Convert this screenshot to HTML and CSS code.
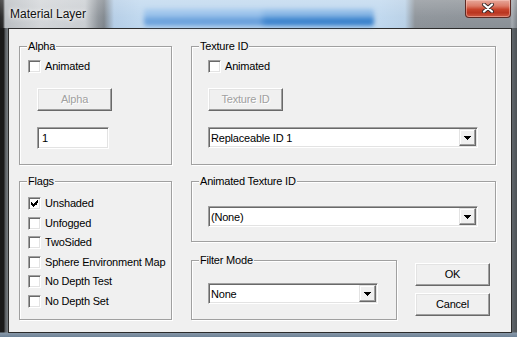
FILE: index.html
```html
<!DOCTYPE html>
<html>
<head>
<meta charset="utf-8">
<link rel="stylesheet" href="styles.css">
</head>
<body>
<div class="window">
  <div class="titlebar">
    <span class="title">Material Layer</span>
    <div class="glass-blur"></div>
    <div class="close">
      <svg width="14" height="10" viewBox="0 0 14 10">
        <path d="M3 1.5 L11 8.5 M11 1.5 L3 8.5" stroke="#3a2a2a" stroke-width="4" stroke-linecap="round"/>
        <path d="M3 1.5 L11 8.5 M11 1.5 L3 8.5" stroke="#ffffff" stroke-width="2.2" stroke-linecap="round"/>
      </svg>
    </div>
  </div>
  <div class="client">
    <div class="col col-left">
      <fieldset class="group g-alpha">
        <legend>Alpha</legend>
        <div class="gbody alpha-body">
          <div class="check"><span class="box"></span><span>Animated</span></div>
          <div class="btn disabled">Alpha</div>
          <div class="edit">1</div>
        </div>
      </fieldset>
      <fieldset class="group g-flags">
        <legend>Flags</legend>
        <div class="gbody flags-body">
          <div class="check"><span class="box checked"><svg width="7" height="7" viewBox="0 0 7 7" shape-rendering="crispEdges"><path d="M6 0h1v3H6z M5 1h1v4H5z M4 2h1v3H4z M0 2h1v3H0z M1 3h1v3H1z M2 4h1v3H2z M3 3h1v3H3z" fill="#000"/></svg></span><span>Unshaded</span></div>
          <div class="check"><span class="box"></span><span>Unfogged</span></div>
          <div class="check"><span class="box"></span><span>TwoSided</span></div>
          <div class="check"><span class="box"></span><span>Sphere Environment Map</span></div>
          <div class="check"><span class="box"></span><span>No Depth Test</span></div>
          <div class="check"><span class="box"></span><span>No Depth Set</span></div>
        </div>
      </fieldset>
    </div>
    <div class="col col-right">
      <fieldset class="group g-texture">
        <legend>Texture ID</legend>
        <div class="gbody tex-body">
          <div class="check"><span class="box"></span><span>Animated</span></div>
          <div class="btn disabled">Texture ID</div>
          <div class="combo wide">
            <span class="combo-text">Replaceable ID 1</span>
            <span class="combo-btn"><svg width="7" height="4" viewBox="0 0 7 4" shape-rendering="crispEdges"><path d="M0 0h7v1H0z M1 1h5v1H1z M2 2h3v1H2z M3 3h1v1H3z" fill="#000"/></svg></span>
          </div>
        </div>
      </fieldset>
      <fieldset class="group g-animtex">
        <legend>Animated Texture ID</legend>
        <div class="gbody animtex-body">
          <div class="combo wide">
            <span class="combo-text">(None)</span>
            <span class="combo-btn"><svg width="7" height="4" viewBox="0 0 7 4" shape-rendering="crispEdges"><path d="M0 0h7v1H0z M1 1h5v1H1z M2 2h3v1H2z M3 3h1v1H3z" fill="#000"/></svg></span>
          </div>
        </div>
      </fieldset>
      <div class="bottom-row">
        <fieldset class="group g-filter">
          <legend>Filter Mode</legend>
          <div class="gbody filter-body">
            <div class="combo narrow">
              <span class="combo-text">None</span>
              <span class="combo-btn"><svg width="7" height="4" viewBox="0 0 7 4" shape-rendering="crispEdges"><path d="M0 0h7v1H0z M1 1h5v1H1z M2 2h3v1H2z M3 3h1v1H3z" fill="#000"/></svg></span>
            </div>
          </div>
        </fieldset>
        <div class="actions">
          <div class="btn">OK</div>
          <div class="btn">Cancel</div>
        </div>
      </div>
    </div>
  </div>
</div>
</body>
</html>
```

FILE: styles.css
```css
* { box-sizing: border-box; }
html, body { margin: 0; padding: 0; }
body {
  width: 517px;
  height: 337px;
  overflow: hidden;
  background: #1b1b1b;
  font-family: "Liberation Sans", Arial, sans-serif;
  font-size: 11px;
  letter-spacing: -0.2px;
  color: #000;
}
.window {
  width: 517px;
  height: 337px;
  display: flex;
  flex-direction: column;
  background:
    linear-gradient(to bottom, rgba(0,0,0,0) 0, rgba(0,0,0,0) 332px, #8798a8 333px, #6d8296 337px),
    linear-gradient(to right, #1a1a1a 0, #1a1a1a 4px, #55595d 5px, #7c8287 8px, #7c8287 510px, #60666b 512px, #4d5256 517px);
}
.titlebar {
  height: 28px;
  flex: none;
  display: flex;
  align-items: flex-start;
  background:
    linear-gradient(to bottom, rgba(255,255,255,0.22) 0, rgba(255,255,255,0.05) 60%, rgba(255,255,255,0) 100%),
    linear-gradient(to right, #1e1e1e 0, #2a2a2a 3px, #b9bdc1 5px, #d2d5d8 40px, #c9cdd1 85px, #8d9399 98px, #7e858c 104px, #b4cde6 114px, #bed7ee 140px, #bed7ee 380px, #b8d0e6 405px, #8c9298 415px, #8a9096 465px, #8a9096 510px, #a4aab0 512px, #7a8086 517px);
}
.title {
  margin: 7px 0 0 10px;
  font-size: 12px;
  line-height: 14px;
  letter-spacing: 0;
  color: #111;
  text-shadow: 0 0 6px rgba(255,255,255,0.95), 0 0 3px rgba(255,255,255,0.9);
  white-space: nowrap;
}
.glass-blur {
  margin: 9px 0 0 58px;
  width: 230px;
  height: 17px;
  background:
    linear-gradient(to bottom, rgba(190,218,245,0.75) 0, rgba(190,218,245,0.55) 40%, rgba(190,218,245,0) 60%),
    linear-gradient(to right, #6ea4dd 0, #6aa1dc 50%, #3f86cf 53%, #3a82cc 100%);
  filter: blur(2px);
  border-radius: 3px;
}
.close {
  margin-left: auto;
  margin-right: 6px;
  width: 46px;
  height: 18px;
  border: 1px solid #5b2a24;
  border-top: none;
  border-radius: 0 0 4px 4px;
  background: linear-gradient(to bottom, #e7a89b 0, #dc7c68 35%, #c8442c 55%, #b93520 75%, #cf5a44 100%);
  box-shadow: inset 0 0 0 1px rgba(255,210,200,0.45);
  display: flex;
  align-items: center;
  justify-content: center;
}
.close svg { display: block; margin-top: -1px; }
.client {
  flex: 1;
  margin: 0 5px 4px 8px;
  border: 1px solid #2c2c2c;
  background: #f0f0f0;
  display: flex;
  align-items: flex-start;
  gap: 19px;
  padding: 11px 0 0 10px;
}
.col { display: flex; flex-direction: column; }
.col-left { width: 153px; }
.col-right { width: 305px; }
.group {
  margin: 0;
  padding: 0;
  min-width: 0;
  border: 1px solid #a0a0a0;
  box-shadow: inset 1px 1px 0 #fff, 1px 1px 0 #fff;
}
.group legend {
  margin-left: 7px;
  padding: 0 1px;
  line-height: 13px;
  height: 13px;
  background: #f0f0f0;
  white-space: nowrap;
}
.gbody { display: flex; flex-direction: column; align-items: flex-start; }
.g-alpha, .g-texture { height: 125px; }
.g-flags { height: 145px; margin-top: 10px; }
.g-animtex { height: 67px; margin-top: 10px; }
.bottom-row { display: flex; align-items: flex-start; margin-top: 12px; }
.g-filter { width: 206px; height: 66px; }
.alpha-body { padding: 7px 0 0 8px; }
.alpha-body .btn { margin: 15px 0 0 9px; }
.alpha-body .edit { margin: 16px 0 0 9px; }
.tex-body { padding: 7px 0 0 16px; }
.tex-body .btn { margin-top: 15px; }
.tex-body .combo { margin-top: 16px; }
.flags-body { padding: 9px 0 0 8px; gap: 6.5px; }
.animtex-body { padding: 18px 0 0 16px; }
.filter-body { padding: 16px 0 0 16px; }
.check {
  display: flex;
  align-items: center;
  height: 13px;
  line-height: 13px;
  white-space: nowrap;
}
.box {
  width: 13px;
  height: 13px;
  flex: none;
  margin-right: 4px;
  background: #fff;
  border: 1px solid;
  border-color: #a0a0a0 #fff #fff #a0a0a0;
  box-shadow: inset 1px 1px 0 #696969, inset -1px -1px 0 #e3e3e3;
  display: flex;
  align-items: center;
  justify-content: center;
}
.box svg { display: block; }
.btn {
  width: 75px;
  height: 23px;
  line-height: 21px;
  text-align: center;
  background: #f0f0f0;
  border: 1px solid;
  border-color: #fff #696969 #696969 #fff;
  box-shadow: inset -1px -1px 0 #a0a0a0, inset 1px 1px 0 #e3e3e3;
  white-space: nowrap;
}
.btn.disabled {
  color: #a0a0a0;
  text-shadow: 1px 1px 0 #fff;
}
.edit {
  width: 72px;
  height: 22px;
  line-height: 18px;
  padding-left: 4px;
  background: #fff;
  border: 1px solid;
  border-color: #a0a0a0 #fff #fff #a0a0a0;
  box-shadow: inset 1px 1px 0 #696969, inset -1px -1px 0 #e3e3e3;
  padding-top: 1px;
}
.combo {
  height: 21px;
  display: flex;
  align-items: stretch;
  background: #fff;
  border: 1px solid;
  border-color: #a0a0a0 #fff #fff #a0a0a0;
  box-shadow: inset 1px 1px 0 #696969, inset -1px -1px 0 #e3e3e3;
  padding: 1px;
}
.combo.wide { width: 270px; }
.combo.narrow { width: 170px; }
.combo-text {
  flex: 1;
  padding-left: 1px;
  padding-top: 1px;
  line-height: 17px;
  white-space: nowrap;
  overflow: hidden;
}
.combo-btn {
  width: 17px;
  height: 17px;
  flex: none;
  background: #f0f0f0;
  border: 1px solid;
  border-color: #e3e3e3 #696969 #696969 #e3e3e3;
  box-shadow: inset -1px -1px 0 #a0a0a0, inset 1px 1px 0 #fff;
  display: flex;
  align-items: center;
  justify-content: center;
}
.combo-btn svg { display: block; margin-top: 1px; }
.actions {
  display: flex;
  flex-direction: column;
  gap: 7px;
  margin: 9px 0 0 18px;
}
```
